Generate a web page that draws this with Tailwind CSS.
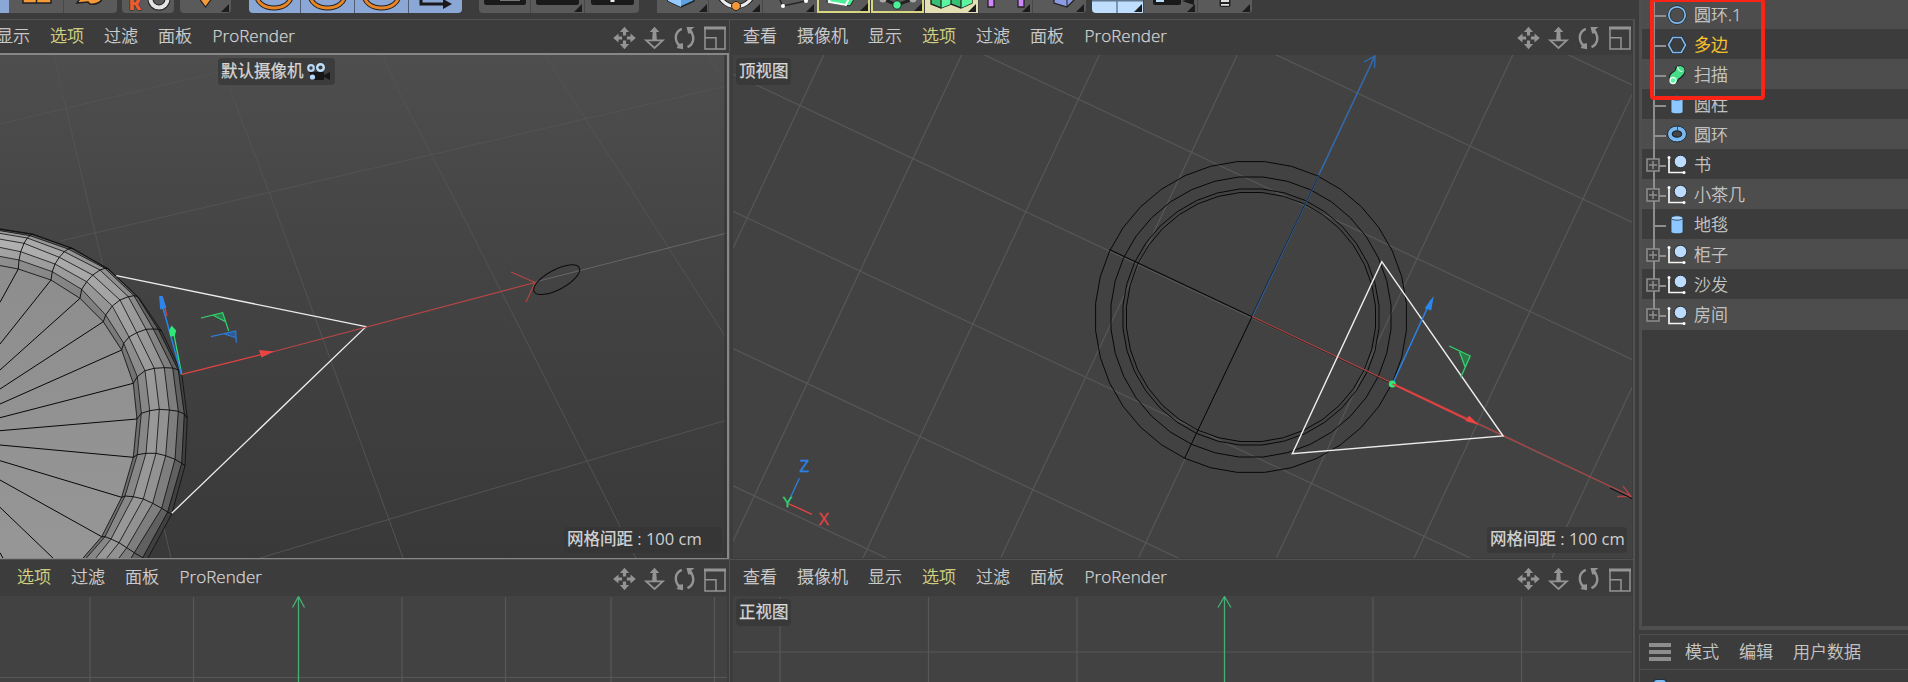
<!DOCTYPE html>
<html lang="zh-CN">
<head>
<meta charset="utf-8">
<title>Viewports</title>
<script src="https://cdn.jsdelivr.net/npm/@tailwindcss/browser@4"></script>
</head>
<body class="w-[1908px] h-[682px] overflow-hidden bg-[#3c3c3c] font-['Open_Sans','Noto_Sans_CJK_SC',sans-serif] text-[17px] leading-none font-light text-[#d6d6d6] [-webkit-text-stroke:0.25px]">
<svg class="hidden">
  <symbol id="nav" viewBox="0 0 104 24">
    <g fill="#949494">
      <path d="M11.5 .8l4.6 5.2h-3v3.6h-3.2V6h-3zM11.5 23.2l4.6-5.2h-3v-3.6h-3.2V18h-3zM.2 12l5.3-4.6v3h3.6v3.2H5.500v3zM22.800 12l-5.300-4.600v3h-3.600v3.200h3.600v3z"/>
      <path d="M41.500 .8l4.800 5.200h-3l.6 8.500h-4.800l.6-8.500h-3z"/>
      <path d="M73.500 .9h8l-3.200 2.600 2 3.500-5.200.5zM63.500 18l6.500-.8 0 6-6.500-1.200 1.500-2z"/>
    </g>
    <g fill="none" stroke="#949494">
      <path stroke-width="1.800" d="M33.200 14.300h16.600L41.500 22z"/>
      <path stroke-width="2.400" d="M68.800 2.800C61.500 6 60.800 14.500 67 20.200M74.500 21.200C81.500 18 82.200 9.500 76.200 3.800"/>
    </g>
  </symbol>
  <symbol id="full" viewBox="0 0 22 24">
    <path fill="none" stroke="#949494" stroke-width="1.500" d="M1 1v22h20V1M1 11.700h11V23"/><path fill="#949494" d="M0 .5h22v3H0z"/>
  </symbol>
  <symbol id="null" viewBox="0 0 20 20">
    <circle cx="13.500" cy="6.500" r="6.300" fill="#bcdcff" stroke="#2a2a2a" stroke-width="1"/>
    <path d="M2 2.500V17.500H17" fill="none" stroke="#f4f4f4" stroke-width="1.700"/><circle cx="2" cy="2.500" r="1.500" fill="#fff"/><circle cx="17" cy="17.500" r="1.500" fill="#fff"/>
  </symbol>
  <symbol id="cyl" viewBox="0 0 20 20">
    <path d="M4 3v14c0 2.400 12 2.400 12 0V3z" fill="#8cc8ff" stroke="#2c3238" stroke-width=".8"/><ellipse cx="10" cy="3" rx="6" ry="2.200" fill="#a9d7ff" stroke="#2b4258" stroke-width=".9"/>
  </symbol>
  <symbol id="tri" viewBox="0 0 8 8"><path d="M8 0v8H0z" fill="#1c1c1c"/></symbol>
</svg>

<div class="flex w-[1908px] h-[682px]">
  <main class="w-[1639px] h-[682px] flex flex-col">
    <!-- tool bar -->
    <div class="h-[19px] flex items-start overflow-hidden">
      <div class="flex h-[13px]">
        <div class="w-[9px] bg-[#8aa7d6]"></div>
        <svg class="w-[54px] h-[13px] bg-[#5a5a5a]"><path d="M14-4h28v7H14zM27.500-4v7" fill="#f59a36" stroke="#222" stroke-width="1.500"/></svg>
        <svg class="w-[54px] h-[13px] bg-[#5a5a5a] border-l border-[#484848] rounded-br-sm"><path d="M13 3l4-6h22c-1 5-7 8-13 7l-2-2z" fill="#f59a36" stroke="#222" stroke-width="1.500"/></svg>
      </div>
      <svg class="w-[52px] h-[13px] ml-[5px] bg-[#5a5a5a] rounded-b-sm"><circle cx="37" cy="-1" r="8.500" fill="none" stroke="#222" stroke-width="6"/><circle cx="37" cy="-1" r="8.500" fill="none" stroke="#e4e4e4" stroke-width="4"/><text x="6.500" y="9.500" font-size="19" font-weight="800" fill="#ee5a2c" stroke="#282828" stroke-width="1" paint-order="stroke">R</text></svg>
      <svg class="w-[51px] h-[13px] ml-[6px] bg-[#5a5a5a] rounded-b-sm"><path d="M18-3h15l-7.500 10z" fill="#f59a36" stroke="#222" stroke-width="1.200"/><use href="#tri" x="41" y="4" width="8" height="8"/></svg>
      <div class="flex h-[13px] ml-[18px] divide-x divide-[#4f5c72] rounded-b-sm overflow-hidden">
        <svg class="w-[52px] h-[13px] bg-[#8aa7d6]"><ellipse cx="25" cy="-4" rx="17" ry="12" fill="none" stroke="#222" stroke-width="5"/><ellipse cx="25" cy="-4" rx="17" ry="12" fill="none" stroke="#ea8526" stroke-width="3"/></svg>
        <svg class="w-[54px] h-[13px] bg-[#8aa7d6]"><ellipse cx="26.500" cy="-4" rx="17" ry="12" fill="none" stroke="#222" stroke-width="5"/><ellipse cx="26.500" cy="-4" rx="17" ry="12" fill="none" stroke="#ea8526" stroke-width="3"/></svg>
        <svg class="w-[54px] h-[13px] bg-[#8aa7d6]"><ellipse cx="26.500" cy="-4" rx="17" ry="12" fill="none" stroke="#222" stroke-width="5"/><ellipse cx="26.500" cy="-4" rx="17" ry="12" fill="none" stroke="#ea8526" stroke-width="3"/></svg>
        <svg class="w-[53px] h-[13px] bg-[#8aa7d6]"><path d="M12-2v6h22" fill="none" stroke="#1a1a1a" stroke-width="3"/><path d="M34-1l9 5-9 5z" fill="#1a1a1a"/></svg>
      </div>
      <div class="flex h-[13px] ml-[17px] divide-x divide-[#484848] rounded-b-sm overflow-hidden">
        <svg class="w-[52px] h-[13px] bg-[#5a5a5a]"><rect x="5" y="-6" width="42" height="11" rx="2.500" fill="#1a1a1a"/><path d="M21 .5h20" stroke="#777" stroke-width="1"/></svg>
        <svg class="w-[54px] h-[13px] bg-[#5a5a5a]"><rect x="5" y="-6" width="43" height="11" rx="2.500" fill="#1a1a1a"/><use href="#tri" x="43" y="4" width="8" height="8"/></svg>
        <svg class="w-[54px] h-[13px] bg-[#5a5a5a]"><rect x="6" y="-6" width="43" height="11" rx="2.500" fill="#1a1a1a"/><path d="M27.500-1v3" stroke="#eee" stroke-width="4"/></svg>
      </div>
      <div class="flex h-[13px] ml-[18px] divide-x divide-[#484848]">
        <svg class="w-[52px] h-[13px] bg-[#5a5a5a]"><path d="M11-6h26v7L24 7 11 1z" fill="#5ca2e2" stroke="#222" stroke-width="1.500"/><path d="M11-6h13V7L11 1z" fill="#97cbff"/><use href="#tri" x="42" y="4" width="8" height="8"/></svg>
        <svg class="w-[54px] h-[13px] bg-[#5a5a5a]"><circle cx="27" cy="-12" r="18.500" fill="none" stroke="#222" stroke-width="5"/><circle cx="27" cy="-12" r="18.500" fill="none" stroke="#eee" stroke-width="3"/><circle cx="27" cy="6" r="4.500" fill="#f3963a" stroke="#222"/><use href="#tri" x="43" y="4" width="8" height="8"/></svg>
        <svg class="w-[54px] h-[13px] bg-[#5a5a5a]"><path d="M14-6l6 12L43 1" fill="none" stroke="#262626" stroke-width="1.500"/><circle cx="20" cy="6" r="2" fill="#fff"/><circle cx="43" cy="1" r="2" fill="#fff"/><use href="#tri" x="43" y="4" width="8" height="8"/></svg>
      </div>
      <svg class="w-[53px] h-[13px] bg-[#5a5a5a] border-2 border-t-0 border-[#d9d682]"><path d="M8-2v4l23 4 6-10z" fill="#4cf096" stroke="#222"/><path d="M11-2l-1 4 17 3 3-7" fill="none" stroke="#fff" stroke-width="2"/><use href="#tri" x="41" y="3" width="8" height="8"/></svg>
      <svg class="w-[53px] h-[13px] ml-px bg-[#5a5a5a] border-2 border-t-0 border-[#d9d682]"><path d="M10-1l14 6L40-1" fill="none" stroke="#222" stroke-width="3"/><circle cx="10" cy="-1" r="3.500" fill="#aaa"/><circle cx="40" cy="-1" r="3.500" fill="#aaa"/><circle cx="24" cy="5" r="4.200" fill="#4cf096" stroke="#222"/><use href="#tri" x="41" y="3" width="8" height="8"/></svg>
      <div class="flex h-[13px] ml-px divide-x divide-[#484848]">
        <svg class="w-[54px] h-[13px] bg-[#e2dfb4]"><path d="M6-4v8l10 4 10-4 10 4 11-5v-8z" fill="#35c074" stroke="#222" stroke-width="1.400"/><path d="M16-1v9l10-4v-8zM36-1v9l11-5v-7z" fill="#5cf5a0"/><path d="M16-2v10M26-2v6M36-2v10" stroke="#222" stroke-width="1.200"/><use href="#tri" x="43" y="4" width="8" height="8"/></svg>
        <svg class="w-[54px] h-[13px] bg-[#5a5a5a]"><path d="M9-2h6v9H9zM39-2h6v9h-6z" fill="#cf86ff" stroke="#222" stroke-width="1.300"/><use href="#tri" x="43" y="4" width="8" height="8"/></svg>
        <svg class="w-[53px] h-[13px] bg-[#5a5a5a] rounded-br-sm"><path d="M21-2v5l13 4 7-7v-4z" fill="#8b9ce4" stroke="#222" stroke-width="1.300"/><path d="M34 7V-2" stroke="#222"/><use href="#tri" x="43" y="4" width="8" height="8"/></svg>
      </div>
      <div class="flex h-[13px] ml-[6px] divide-x divide-[#484848] rounded-b-sm overflow-hidden">
        <svg class="w-[52px] h-[13px] bg-[#bfddfd]"><path d="M0 .8h52M25 0v13" stroke="#62788e" stroke-width="1.400"/><use href="#tri" x="42" y="4" width="8" height="8"/></svg>
        <svg class="w-[54px] h-[13px] bg-[#5a5a5a]"><rect x="9" y="-6" width="28" height="11" rx="2" fill="#1a1a1a"/><path d="M38 1l12-3v7z" fill="#1a1a1a"/><path d="M12-2h8v4h-8z" fill="#bfddfd"/><use href="#tri" x="43" y="4" width="8" height="8"/></svg>
        <svg class="w-[54px] h-[13px] bg-[#5a5a5a]"><rect x="21.500" y="-3" width="11" height="10" rx="2" fill="#222"/><path d="M23 1h8M23 4.800h8" stroke="#ddd" stroke-width="1.800"/><use href="#tri" x="44" y="4" width="8" height="8"/></svg>
      </div>
    </div>

    <div class="grid grid-cols-[730px_905px] grid-rows-[540px_123px]">
      <!-- perspective view -->
      <section class="border-t border-r border-[#515151] overflow-hidden">
        <div class="h-[33px] relative">
          <div class="flex gap-[20px] -ml-[4px] pt-[7px] whitespace-nowrap"><span>显示</span><span class="text-[#dede88]">选项</span><span>过滤</span><span>面板</span><span class="tracking-[0.05px] pl-[0.5px]">ProRender</span></div>
          <svg class="absolute left-[612.500px] top-[5.700px] w-[90px] h-[24px]" viewBox="0 0 90 24"><use href="#nav" width="104" height="24"/></svg>
          <svg class="absolute left-[704px] top-[6px] w-[22px] h-[24px]"><use href="#full"/></svg>
        </div>
        <div class="relative h-[506px] border-t-2 border-r-2 border-b border-[#878787]">
          <svg class="block w-[727px] h-[503px]" viewBox="0 55 727 503">
            <defs>
              <linearGradient id="bg" x2="0" y2="1"><stop stop-color="#4e4e4e"/><stop offset=".45" stop-color="#434343"/><stop offset="1" stop-color="#393939"/></linearGradient>
              <linearGradient id="lit" gradientUnits="userSpaceOnUse" x1="0" y1="230" x2="150" y2="400"><stop stop-color="#fff" stop-opacity=".25"/><stop offset="1" stop-color="#fff" stop-opacity="0"/></linearGradient>
              <linearGradient id="dsk" x2="0" y2="1"><stop stop-color="#8d8d8d"/><stop offset="1" stop-color="#979797"/></linearGradient>
            </defs>
            <rect y="55" width="727" height="503" fill="url(#bg)"/>
            <path d="M54 55L64 100 95 232 171 558M218 55L234 100 272 200 403 558M382 55L403 100 455 200 636 558M545 55L573 100 638 200 725 336M708 55L727 86M0 124L290 55M60 241L727 86M260 558L400 516 727 420" fill="none" stroke="#535353" stroke-width="1"/>
            <path d="M535 282L727 233" stroke="#666"/>
            <path d="M725.500 55v503" stroke="#363636" stroke-width="2"/>
            <g id="mesh"></g>
            <path d="M116.300 275.700L366 326.700 171.700 513.300" fill="none" stroke="#ededed" stroke-width="1.300"/>
            <path d="M273 351.700L535 282.500M511 272l24 10.500-9 19.500" fill="none" stroke="#b84646" stroke-width="1.100"/>
            <path d="M181.700 374.300L273 351.700" stroke="#e24242" stroke-width="1.200"/><path d="M274 351.500l-15-1.500 2.500 7.500z" fill="#ea4444"/>
            <ellipse cx="556.700" cy="279.700" rx="25.500" ry="9.900" transform="rotate(-28 556.700 279.700)" fill="none" stroke="#0c0c0c"/>
            <path d="M181.700 374.300L172.700 328.300" stroke="#2fe070" stroke-width="1.300"/><path d="M181.300 374L160 297" stroke="#2d82e6" stroke-width="1.500"/>
            <path d="M162 296.500l5 19.500" stroke="#d84040" stroke-width="1.200"/><path d="M159.700 296.500h2.600l3.400 11-5 1.600z" fill="#2d86ee" stroke="#2d86ee"/>
            <path d="M171.500 325.500l4.700 5-1.500 5.500-4.500.5-1-6z" fill="#2fe878"/>
            <path d="M212.700 315l10-2.300 3 9z" fill="#2e7a4c"/><path d="M201 318l21.700-5.300 6 18.300M212.700 315l13 6.700" fill="none" stroke="#30d66c" stroke-width="1.200"/>
            <path d="M224 333.700l11.700-2.700v6.700z" fill="#2c5c98"/><path d="M211 336.700l24.700-5.700.6 11.700M224 333.700l11.700 4" fill="none" stroke="#2e7cd8" stroke-width="1.200"/>
          </svg>
          <div class="absolute left-[218px] top-[3px] w-[117px] h-[27px] rounded bg-[#3c3c3c] pl-[3px] pt-[5px] font-normal text-[16.500px] text-[#d6d6d6] flex whitespace-nowrap">默认摄像机
            <svg class="w-[26px] h-[20px] ml-[2px] shrink-0"><path d="M3 9h15v8H7zM18 12l6-3v8l-6-3z" fill="#161616"/><circle cx="5" cy="5" r="2.800" fill="#3c3c3c" stroke="#b4d6f2" stroke-width="2.200"/><circle cx="14.500" cy="4.500" r="3.300" fill="#3c3c3c" stroke="#c0e0fa" stroke-width="2.400"/><circle cx="6.500" cy="14" r="2.600" fill="#b4d8f8"/></svg>
          </div>
          <div class="absolute left-[564px] top-[472px] w-[158px] h-[26px] rounded bg-[#363636] pl-[3px] pt-[4px] font-medium text-[16.500px] text-[#d0d0d0] [-webkit-text-stroke:0px] whitespace-nowrap">网格间距 : 100 cm</div>
        </div>
      </section>

      <!-- top view -->
      <section class="border-t border-r-2 border-[#515151] overflow-hidden pl-[3px]">
        <div class="h-[35px] relative">
          <div class="flex gap-[20px] ml-[10px] pt-[7px] whitespace-nowrap"><span>查看</span><span>摄像机</span><span>显示</span><span class="text-[#dede88]">选项</span><span>过滤</span><span>面板</span><span class="tracking-[0.05px] pl-[0.5px]">ProRender</span></div>
          <svg class="absolute left-[784.200px] top-[5.700px] w-[90px] h-[24px]" viewBox="0 0 90 24"><use href="#nav" width="104" height="24"/></svg>
          <svg class="absolute left-[875.500px] top-[6px] w-[22px] h-[24px]"><use href="#full"/></svg>
        </div>
        <div class="relative">
          <svg class="block w-[899px] h-[503px]" viewBox="733 55 899 503">
            <rect x="733" y="55" width="899" height="503" fill="#424242"/>
            <g id="grid" stroke="#575757" stroke-width="1.200"></g>
            <g id="rings" fill="none" stroke="#080808"></g>
            <path d="M1375 56L1252 317M1364 62l11-6-.5 12" fill="none" stroke="#2e6ab4" stroke-width="1.400"/>
            <path d="M1319 174.700L1251.500 316.700" stroke="#0a0a0a" stroke-width="1" stroke-opacity=".7"/>
            <path d="M1109.300 249.500L1252 316.700 1184.700 458.300" fill="none" stroke="#080808" stroke-width="1.100"/>
            <path d="M1252 316.700L1631 496M1623 486l8 10.500-14 0" fill="none" stroke="#ae4444" stroke-width="1.300"/>
            <path d="M1252 317.500L1392 384" stroke="#0a0a0a" stroke-width="1" stroke-opacity=".6"/><path d="M1610 488l22 10.500" stroke="#080808"/>
            <path d="M1381.800 261.700L1503.100 436 1292.300 453.700z" fill="none" stroke="#ededed" stroke-width="1.400"/>
            <path d="M1392.500 384L1431 300" stroke="#2d82e6" stroke-width="1.500"/><path d="M1433.700 296l-9 12.300 6.500 2.200z" fill="#2d86ee"/>
            <circle cx="1392.300" cy="384" r="3.500" fill="#2fe878"/>
            <path d="M1392.500 384L1470 421" stroke="#e24242" stroke-width="1.700"/><path d="M1479 425l-13.500-4 3.500-5.500z" fill="#ea4444"/>
            <path d="M1459.500 351.700l10.700 4.300-5 10.700z" fill="#2e7a4c"/><path d="M1449.200 346l21 10-9.500 21.500M1459.500 351.700l5.500 15" fill="none" stroke="#30d66c" stroke-width="1.300"/>
            <path d="M787.900 503.300l11.400-25" stroke="#2d7cd8" stroke-width="1.400"/><path d="M787.900 503.300l24.100 11" stroke="#e04444" stroke-width="1.400"/>
            <g font-family="Liberation Sans" font-size="16" font-weight="400"><text x="799.500" y="472" fill="#2d82e6" stroke="#2d82e6" stroke-width=".3">Z</text><text x="818.500" y="524.500" fill="#e24242" stroke="#e24242" stroke-width=".3">X</text><text x="782.500" y="507" font-size="15" fill="#30d66c" stroke="#30d66c" stroke-width=".3">Y</text></g>
          </svg>
          <div class="absolute left-[3px] top-[3px] w-[55px] h-[27px] rounded bg-[#393939] pl-[3px] pt-[5px] font-normal text-[16.500px] text-[#d6d6d6] whitespace-nowrap">顶视图</div>
          <div class="absolute left-[754px] top-[472px] w-[140px] h-[26px] rounded bg-[#393939] pl-[3px] pt-[4px] font-medium text-[16.500px] text-[#d0d0d0] [-webkit-text-stroke:0px] whitespace-nowrap">网格间距 : 100 cm</div>
        </div>
      </section>

      <!-- right view -->
      <section class="border-t border-r border-[#515151] overflow-hidden">
        <div class="h-[36px] relative">
          <div class="flex gap-[20px] ml-[17px] pt-[8px] whitespace-nowrap"><span class="text-[#dede88]">选项</span><span>过滤</span><span>面板</span><span class="tracking-[0.05px] pl-[0.5px]">ProRender</span></div>
          <svg class="absolute left-[612.500px] top-[7.300px] w-[90px] h-[24px]" viewBox="0 0 90 24"><use href="#nav" width="104" height="24"/></svg>
          <svg class="absolute left-[704px] top-[7.500px] w-[22px] h-[24px]"><use href="#full"/></svg>
        </div>
        <svg class="block w-[727px] h-[87px]" viewBox="0 596 727 87">
          <rect y="596" width="727" height="87" fill="#424242"/>
          <path d="M90 597v86M193.500 597v86M402 597v86M505.500 597v86M611 597v86M714.500 597v86M0 677.500h727" stroke="#575757" stroke-width="1.200"/>
          <path d="M298.500 683V597M292.500 607.500l6-11 6 11" fill="none" stroke="#45b074" stroke-width="1.300"/>
        </svg>
      </section>

      <!-- front view -->
      <section class="border-t border-r-2 border-[#515151] overflow-hidden pl-[3px]">
        <div class="h-[36px] relative">
          <div class="flex gap-[20px] ml-[10px] pt-[8px] whitespace-nowrap"><span>查看</span><span>摄像机</span><span>显示</span><span class="text-[#dede88]">选项</span><span>过滤</span><span>面板</span><span class="tracking-[0.05px] pl-[0.5px]">ProRender</span></div>
          <svg class="absolute left-[784.200px] top-[7.300px] w-[90px] h-[24px]" viewBox="0 0 90 24"><use href="#nav" width="104" height="24"/></svg>
          <svg class="absolute left-[875.500px] top-[7.500px] w-[22px] h-[24px]"><use href="#full"/></svg>
        </div>
        <div class="relative">
          <svg class="block w-[899px] h-[86px]" viewBox="733 596 899 86">
            <rect x="733" y="596" width="899" height="86" fill="#424242"/>
            <path d="M780 597v85M928.500 597v85M1077 597v85M1373 597v85M1521.500 597v85M733 652h899" stroke="#575757" stroke-width="1.200"/>
            <path d="M1224.500 682V597M1218 607.500l6.500-11 6.500 11" fill="none" stroke="#45b074" stroke-width="1.300"/>
          </svg>
          <div class="absolute left-[3px] top-[3px] w-[55px] h-[27px] rounded bg-[#393939]/90 pl-[3px] pt-[5px] font-normal text-[16.500px] text-[#d6d6d6] whitespace-nowrap">正视图</div>
        </div>
      </section>
    </div>
  </main>

  <aside class="w-[269px] h-[682px] flex flex-col text-[#cecece]">
    <!-- object tree -->
    <div class="relative h-[630px] border-l-3 border-b-4 border-[#4f4f4f] overflow-hidden">
      <div class="-mt-px">
        <div class="h-[30px] bg-[#4d4d4d] flex items-center pl-[25px]"><svg class="w-[20px] h-[20px] mt-[2px]"><circle cx="10" cy="10" r="8.200" fill="none" stroke="#1f2a34" stroke-width="3"/><circle cx="10" cy="10" r="8.200" fill="none" stroke="#7fb9ee" stroke-width="1.700"/></svg><span class="ml-[7px]">圆环.1</span></div>
        <div class="h-[30px] bg-[#3c3c3c] flex items-center pl-[25px]"><svg class="w-[20px] h-[20px] mt-[2px]"><path d="M1.500 10L5.700 2.500h8.600L18.500 10l-4.200 7.500H5.700z" fill="none" stroke="#1f2a34" stroke-width="3"/><path d="M1.500 10L5.700 2.500h8.600L18.500 10l-4.200 7.500H5.700z" fill="none" stroke="#7fb9ee" stroke-width="1.600"/></svg><span class="ml-[7px] text-[#ffc62e] [-webkit-text-stroke:0.4px]">多边</span></div>
        <div class="h-[30px] bg-[#4d4d4d] flex items-center pl-[25px]"><svg class="w-[20px] h-[20px] mt-[2px]"><path d="M5.500 15.500C3 9 9 9.500 10.500 7.500 12 5.500 10 4 12.500 3.500 15.500 3.500 16 7 13.500 9.500 12 11 9 12 8 15" fill="none" stroke="#222" stroke-width="6.500" stroke-linecap="round"/><path d="M5.500 14.500C4 10 9 9.500 10.500 7.500 12 5.500 11 3.500 13 3.500 16.500 4 15 8 12.500 9.500 10 11 8.500 12 7.500 15" fill="none" stroke="#45dd88" stroke-width="5" stroke-linecap="round"/><circle cx="6" cy="15.500" r="3" fill="#5cf5a4" stroke="#e2ffec" stroke-width="1.400"/><path d="M10.500 1.500c.5 3 2 5 5 5" fill="none" stroke="#d8ffe6" stroke-width="1.200"/></svg><span class="ml-[7px]">扫描</span></div>
        <div class="h-[30px] bg-[#3c3c3c] flex items-center pl-[25px]"><svg class="w-[20px] h-[20px] mt-[2px]"><use href="#cyl"/></svg><span class="ml-[7px]">圆柱</span></div>
        <div class="h-[30px] bg-[#4d4d4d] flex items-center pl-[25px]"><svg class="w-[20px] h-[20px]"><ellipse cx="10" cy="10" rx="9.500" ry="8" fill="#7ab8f0" stroke="#1e2a36" stroke-width="1"/><ellipse cx="10" cy="10" rx="4.700" ry="3.200" fill="#454545" stroke="#1e2a36" stroke-width="1.200"/><path d="M10.500 2v4" stroke="#2c5478" stroke-width="1"/></svg><span class="ml-[7px]">圆环</span></div>
        <div class="h-[30px] bg-[#3c3c3c] flex items-center pl-[25px]"><svg class="w-[20px] h-[20px] mt-[2px]"><use href="#null"/></svg><span class="ml-[7px]">书</span></div>
        <div class="h-[30px] bg-[#4d4d4d] flex items-center pl-[25px]"><svg class="w-[20px] h-[20px] mt-[2px]"><use href="#null"/></svg><span class="ml-[7px]">小茶几</span></div>
        <div class="h-[30px] bg-[#3c3c3c] flex items-center pl-[25px]"><svg class="w-[20px] h-[20px] mt-[2px]"><use href="#cyl"/></svg><span class="ml-[7px]">地毯</span></div>
        <div class="h-[30px] bg-[#4d4d4d] flex items-center pl-[25px]"><svg class="w-[20px] h-[20px] mt-[2px]"><use href="#null"/></svg><span class="ml-[7px]">柜子</span></div>
        <div class="h-[30px] bg-[#3c3c3c] flex items-center pl-[25px]"><svg class="w-[20px] h-[20px] mt-[2px]"><use href="#null"/></svg><span class="ml-[7px]">沙发</span></div>
        <div class="h-[31px] bg-[#4d4d4d] flex items-center pl-[25px]"><svg class="w-[20px] h-[20px] mt-[2px]"><use href="#null"/></svg><span class="ml-[7px]">房间</span></div>
      </div>
      <svg class="absolute left-0 top-0 w-[26px] h-[330px]" fill="none" stroke="#8e8e8e">
        <path stroke-width="2" d="M12 0v309M12 16h12M12 46h12M12 76h12M12 106h12M12 136h12M12 166h12M12 196h12M12 226h12M12 256h12M12 286h12M12 316h12"/>
        <g id="boxes" stroke-width="1.500"></g>
      </svg>
      <div class="absolute left-[8px] -top-[2px] w-[115px] h-[102px] border-4 border-[#fb2216] rounded-[4px]"></div>
    </div>
    <!-- attribute bar -->
    <div class="mt-[4px] h-[48px] border-t border-l border-[#4f4f4f] overflow-hidden">
      <div class="h-[35px] border-b border-[#4f4f4f] flex items-center gap-[20px] pl-[9px] pb-[2px]">
        <div class="w-[22px] flex flex-col gap-[3px] -mr-[6px] mt-[2px]"><i class="h-[4px] bg-[#8e8e8e]"></i><i class="h-[4px] bg-[#8e8e8e]"></i><i class="h-[4px] bg-[#8e8e8e]"></i></div>
        <span>模式</span><span>编辑</span><span>用户数据</span>
      </div>
      <div class="ml-[13px] mt-[9px] w-[14px] h-[4px] bg-[#7fbdf2] border border-[#20303e] rounded-t-sm"></div>
    </div>
  </aside>
</div>

<script>
const NS = 'http://www.w3.org/2000/svg';
function add(parent, tag, attrs) {
  const e = document.createElementNS(NS, tag);
  for (const k in attrs) e.setAttribute(k, attrs[k]);
  parent.appendChild(e);
}
// Each rib runs across the rim, from the inner edge to the silhouette; units are thirds of a pixel.
const ribs = [
  [[-60,185],[-60,158],[-60,130],[-60,107],[-60,90],[-60,82],[-60,79],[-60,77]],
  [[55,207],[57,180],[62,155],[72,130],[82,114],[90,107],[95,103],[98,102]],
  [[153,240],[157,215],[165,192],[178,172],[193,155],[205,147],[213,144],[220,146]],
  [[240,295],[245,268],[260,245],[278,225],[300,210],[315,205],[322,205],[328,209]],
  [[310,365],[317,345],[337,318],[360,300],[385,290],[402,287],[412,289],[418,295]],
  [[365,450],[371,430],[387,411],[410,398],[438,388],[460,387],[475,388],[485,394]],
  [[400,550],[412,530],[435,512],[463,505],[493,503],[518,504],[535,510],[545,520]],
  [[411,657],[424,640],[449,632],[478,628],[508,630],[535,634],[553,642],[562,655]],
  [[400,772],[412,764],[438,760],[468,760],[497,767],[525,778],[545,790],[555,797]],
  [[365,892],[375,888],[400,890],[430,897],[458,910],[485,925],[503,936],[515,942]],
  [[305,1010],[315,1010],[333,1017],[357,1028],[380,1043],[403,1058],[428,1073],[438,1085]],
  [[200,1130],[210,1130],[235,1140],[260,1150],[290,1165],[330,1180],[370,1190],[390,1195]]
];
const pt = p => (p[0] / 3).toFixed(1) + ',' + (200 + p[1] / 3).toFixed(1);
const line = a => a.map(pt).join(' ');
const mesh = document.getElementById('mesh');
const ring = i => ribs.map(r => r[i]);
add(mesh, 'polygon', { points: line([[-60,1130], ...ring(0)]), fill: 'url(#dsk)' });
['#6e6e6e', '#878787', '#989898', '#929292', '#7e7e7e', '#606060', '#404040'].forEach((c, i) =>
  add(mesh, 'polygon', { points: line([...ring(i), ...ring(i + 1).reverse()]), fill: c, stroke: c, 'stroke-width': .5 }));
add(mesh, 'polygon', { points: line([...ring(0), ...ring(5).reverse()]), fill: 'url(#lit)' });
for (let i = 0; i < 8; i++) add(mesh, 'polyline', { points: line(ring(i)), fill: 'none', stroke: '#0c0c0c', 'stroke-width': .9, 'stroke-opacity': .85 });
ribs.forEach(r => add(mesh, 'polyline', { points: line(r), fill: 'none', stroke: '#080808', 'stroke-width': .9 }));
[307,432,510,567,612,653,692,735,782,840].forEach((y, i) =>
  add(mesh, 'polyline', { points: line([ribs[i + 1][0], [0, y]]), fill: 'none', stroke: '#080808', 'stroke-width': 1 }));
add(mesh, 'polyline', { points: line([[165,1080],[0,922]]), stroke: '#080808' });
add(mesh, 'polyline', { points: line([[12,1080],[0,1058]]), stroke: '#080808' });

const grid = document.getElementById('grid');
for (let k = -5; k <= 3; k++) {
  const x = 1375 + 137.8 * k;
  add(grid, 'line', { x1: x, y1: 55, x2: x - 236.5, y2: 558 });
}
for (let k = -3; k <= 3; k++) {
  const y = 74 + 137.3 * k;
  add(grid, 'line', { x1: 733, y1: y, x2: 1632, y2: y + 422.8 });
}
const rings = document.getElementById('rings');
[156, 140.500, 128.500, 125].forEach(r => {
  const p = [];
  for (let i = 0; i < 36; i++) {
    const a = (i + .5) * Math.PI / 18;
    p.push((1251 + r * Math.sin(a)).toFixed(1) + ',' + (317 - r * Math.cos(a)).toFixed(1));
  }
  add(rings, 'polygon', { points: p.join(' ') });
});
const boxes = document.getElementById('boxes');
[165, 195, 255, 285, 315].forEach(y => {
  add(boxes, 'rect', { x: 5, y: y - 6, width: 12, height: 12, fill: '#414141' });
  add(boxes, 'path', { d: `M7 ${y}h8M11 ${y - 4}v8` });
});
</script>
</body>
</html>
